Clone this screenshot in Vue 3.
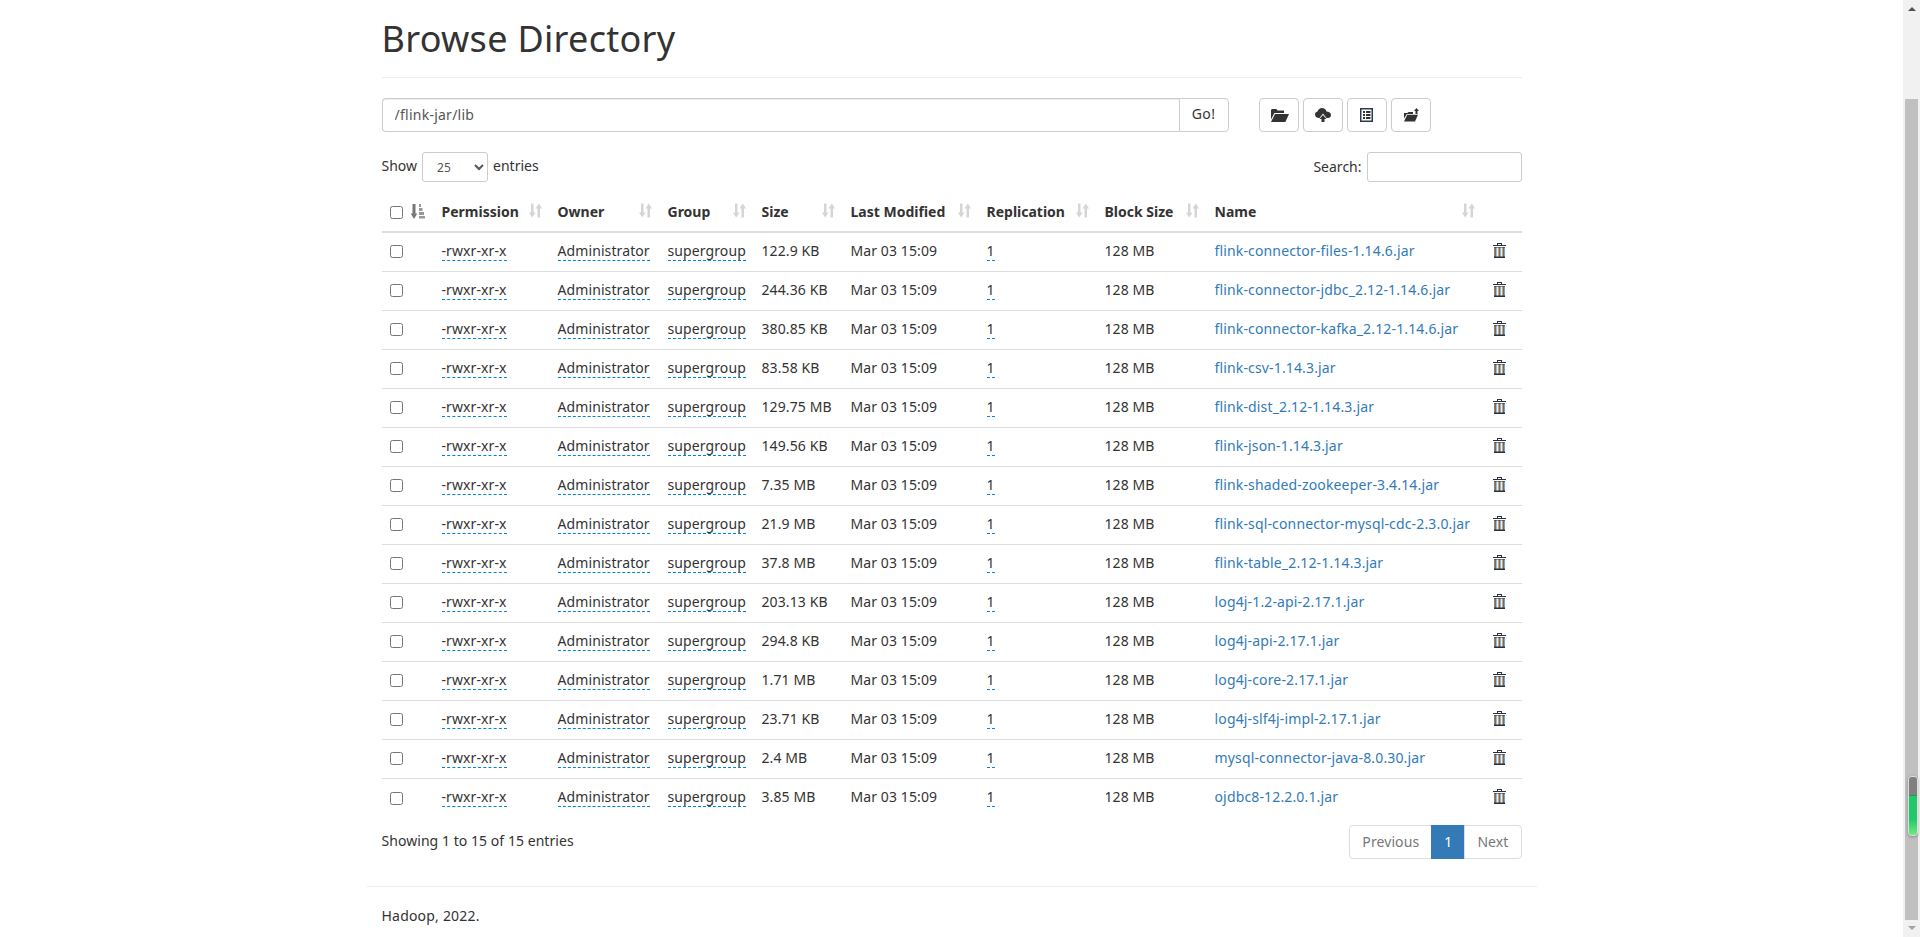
<script setup>
const names = [
  ['flink-connector-files-1.14.6.jar', '122.9 KB'],
  ['flink-connector-jdbc_2.12-1.14.6.jar', '244.36 KB'],
  ['flink-connector-kafka_2.12-1.14.6.jar', '380.85 KB'],
  ['flink-csv-1.14.3.jar', '83.58 KB'],
  ['flink-dist_2.12-1.14.3.jar', '129.75 MB'],
  ['flink-json-1.14.3.jar', '149.56 KB'],
  ['flink-shaded-zookeeper-3.4.14.jar', '7.35 MB'],
  ['flink-sql-connector-mysql-cdc-2.3.0.jar', '21.9 MB'],
  ['flink-table_2.12-1.14.3.jar', '37.8 MB'],
  ['log4j-1.2-api-2.17.1.jar', '203.13 KB'],
  ['log4j-api-2.17.1.jar', '294.8 KB'],
  ['log4j-core-2.17.1.jar', '1.71 MB'],
  ['log4j-slf4j-impl-2.17.1.jar', '23.71 KB'],
  ['mysql-connector-java-8.0.30.jar', '2.4 MB'],
  ['ojdbc8-12.2.0.1.jar', '3.85 MB'],
]
const heads = [
  ['Permission', 116], ['Owner', 110], ['Group', 94], ['Size', 89],
  ['Last Modified', 136], ['Replication', 118], ['Block Size', 110], ['Name', 276],
]
const stripes = ['#b87a30', '#4a78a8', '#8ac0ec', '#f4efe6', '#e0a050', '#7a6a70', '#7fb8e8', '#f4efe6', '#e0a050', '#4f7396', '#6fa8dc']
</script>

<template>
  <div class="page">
    <main class="main">
      <div class="container">
        <header class="page-header"><h1>Browse Directory</h1></header>
        <div class="toolbar">
          <div class="input-group">
            <input class="path" type="text" value="/flink-jar/lib" />
            <button class="go">Go!</button>
          </div>
          <div class="actions">
            <button class="btn">
              <svg class="ic-shift" width="18" height="13" viewBox="0 0 18 13"><path d="M1 0h4.500l1 1.500h6.500V4H3.400L0 10.500V1z" fill="#333"/><path d="M4 5H18l-3.600 8H0z" fill="#333"/></svg>
            </button>
            <button class="btn">
              <svg width="16" height="14" viewBox="0 0 16 14"><path fill="#333" d="M3.500 10C1.500 10 0 8.400 0 6.600c0-1.500 1-2.800 2.500-3.100C3.200 1.400 5 0 7 0c2.300 0 4 1.500 4.500 3.500C13.900 3.500 16 5 16 7c0 1.700-1.300 3-3 3h-1.500L8 5.500 4.500 10z"/><path fill="#333" d="M8 7 11.500 11H9.500V14H6.500V11H4.500z"/></svg>
            </button>
            <button class="btn">
              <svg width="13" height="14" viewBox="0 0 13 14"><path fill="#2a3a55" fill-rule="evenodd" d="M0 0h13v14H0zM1.500 1.500v11h10v-11z"/><path fill="#333" d="M3 3h2v2H3zM6 3h4.500v2H6zM3 6h2v2H3zM6 6h4.500v2H6zM3 9h2v2H3zM6 9h4.500v2H6z"/></svg>
            </button>
            <button class="btn">
              <svg class="ic-shift" width="16" height="14" viewBox="0 0 16 14"><path fill="#333" d="M0 5h3.500l1-1h4.500v2H2.800L0 10.500zM3.200 6.800H14L11 13.500H0z"/><path fill="#333" d="M12.500 0l2.500 3h-1.500v3h-2V3H10z"/></svg>
            </button>
          </div>
        </div>

        <div class="controls">
          <label class="length">
            Show
            <select class="size"><option>25</option></select>
            entries
          </label>
          <label class="search">Search: <input class="search-input" type="text" /></label>
        </div>

        <table class="table">
          <thead>
            <tr>
              <th class="first">
                <input type="checkbox" class="check" />
                <svg class="sorted" width="14" height="15" viewBox="0 0 14 15"><path fill="#777" d="M1.500 0h3v9.500h1.800L3 15-.3 9.500h1.800z"/><path fill="#999" d="M8 0h2v3H8zM8 4h3.500v3H8zM8 8h5v3H8zM8 12h6v2.500H8z"/></svg>
              </th>
              <th v-for="h in heads" :key="h[0]" :style="{ width: h[1] + 'px' }">
                <span class="th-in">
                  {{ h[0] }}
                  <svg class="sort" width="13" height="15" viewBox="0 0 13 14"><path fill="#333" d="M2 0h2.500v9H6.500L3.200 14 0 9h2zM8.500 14V5H6.500L9.800 0 13 5h-2v9z"/></svg>
                </span>
              </th>
              <th class="last"></th>
            </tr>
          </thead>
          <tbody>
            <tr v-for="n in names" :key="n[0]">
              <td class="first"><input type="checkbox" class="check" /></td>
              <td><span class="abbr">-rwxr-xr-x</span></td>
              <td><span class="abbr">Administrator</span></td>
              <td><span class="abbr">supergroup</span></td>
              <td>{{ n[1] }}</td>
              <td>Mar 03 15:09</td>
              <td><span class="abbr">1</span></td>
              <td>128 MB</td>
              <td><a class="link">{{ n[0] }}</a></td>
              <td class="last">
                <svg class="trash" width="13" height="15" viewBox="0 0 13 15">
                  <path fill="#2b3040" d="M4 0h5v2h4v1H0V2h4zM5 1v1h3V1z"/>
                  <rect x="1" y="4" width="11" height="11" fill="#2b3040"/>
                  <rect v-for="(c, i) in stripes" :key="i" :x="1 + i" y="4.500" width="1" height="9" :fill="c"/>
                </svg>
              </td>
            </tr>
          </tbody>
        </table>

        <div class="table-foot">
          <div class="info">Showing 1 to 15 of 15 entries</div>
          <div class="pagination">
            <a class="pg prev">Previous</a><a class="pg active">1</a><a class="pg next">Next</a>
          </div>
        </div>
      </div>
      <div class="footer-rule"></div>
      <div class="container"><p class="footer">Hadoop, 2022.</p></div>
    </main>
    <aside class="scrollbar">
      <div class="arrow up"></div>
      <div class="thumb"></div>
      <div class="arrow down"></div>
      <div class="meter"><div class="meter-top"></div><div class="meter-fill"></div></div>
    </aside>
  </div>
</template>

<style>
html, body { margin: 0; height: 937px; overflow: hidden; background: #fff; }
</style>

<style scoped>
.page {
  display: flex; height: 937px; overflow: hidden;
  font-family: "Noto Sans", "Open Sans", sans-serif;
  font-size: 14px; color: #333; line-height: 20px;
}
.main { flex: 1; min-width: 0; }
.container { width: 1140px; margin: 0 auto; }
.page-header { padding-top: 19px; height: 58px; border-bottom: 1px solid #eee; box-sizing: content-box; }
h1 { margin: 0; font-size: 36px; font-weight: 400; line-height: 40px; letter-spacing: .3px; }
.toolbar { display: flex; margin-top: 20px; gap: 30px; }
.input-group { display: flex; width: 847px; height: 34px; }
.path {
  flex: 1; min-width: 0; box-sizing: border-box; height: 34px; padding: 5px 12px 7px;
  border: 1px solid #ccc; border-right: 0; border-radius: 4px 0 0 4px;
  font: inherit; color: #555; outline: none; letter-spacing: .25px;
  box-shadow: inset 0 1px 1px rgba(0,0,0,.075);
}
.go {
  width: 50px; height: 34px; border: 1px solid #ccc; border-radius: 0 4px 4px 0;
  background: #fff; font: inherit; color: #333; padding: 0 0 2px; letter-spacing: .4px;
}
.actions { display: flex; gap: 4px; }
.btn {
  width: 40px; height: 34px; display: flex; align-items: center; justify-content: center;
  border: 1px solid #ccc; border-radius: 4px; background: #fff; padding: 0;
}
.ic-shift { margin-left: 2px; }
.controls { display: flex; justify-content: space-between; align-items: center; margin-top: 20px; height: 30px; }
.length { display: flex; align-items: center; gap: 5px; padding-bottom: 2px; }
.size {
  width: 66px; height: 30px; box-sizing: border-box; padding: 5px 10px; border: 1px solid #ccc;
  border-radius: 3px; background: #fff; font: inherit; font-size: 12px; color: #555; margin-top: 2px;
}
.search { display: flex; align-items: center; gap: 5px; }
.search-input {
  width: 155px; height: 30px; box-sizing: border-box; border: 1px solid #ccc; border-radius: 3px; outline: none;
}
.table { width: 1140px; border-collapse: separate; border-spacing: 0; table-layout: fixed; margin-top: 10px; }
th {
  height: 41px; box-sizing: border-box; padding: 8px; text-align: left; font-weight: 700;
  border-bottom: 2px solid #ddd; white-space: nowrap;
}
.th-in { display: flex; justify-content: space-between; align-items: center; }
.sort { opacity: .2; margin-top: -3px; }
td { height: 39px; box-sizing: border-box; padding: 6px 8px 9px; border-bottom: 1px solid #ddd; white-space: nowrap; letter-spacing: .1px; }
tbody tr:last-child td { border-bottom: 0; }
th.first { width: 52px; padding: 0 0 0 8px; }
td.first { padding: 0 0 3px 8px; }
.check { width: 13px; height: 13px; margin: 0; vertical-align: middle; }
.sorted { margin-left: 8px; vertical-align: middle; margin-top: -3px; }
.last { width: 39px; }
.abbr { border-bottom: 1px dashed #08c; }
.link { color: #337ab7; letter-spacing: .15px; }
.trash { display: block; margin-left: 2px; margin-top: -1px; }
.table-foot { display: flex; justify-content: space-between; align-items: flex-start; margin-top: 7px; }
.info { margin-top: 6px; letter-spacing: .05px; }
.pagination { display: flex; height: 34px; }
.pg {
  box-sizing: border-box; height: 34px; padding: 6px 12px; border: 1px solid #ddd; margin-left: -1px;
  color: #777; background: #fff; letter-spacing: .1px;
}
.prev { border-radius: 4px 0 0 4px; }
.next { border-radius: 0 4px 4px 0; }
.active { background: #337ab7; border-color: #337ab7; color: #fff; }
.footer-rule { width: 1170px; margin: 27px auto 0; border-top: 1px solid #eee; }
.footer { margin: 19px 0 0; letter-spacing: .2px; }
.scrollbar {
  position: relative; width: 17px; flex: none; background: #f1f1f1;
  display: flex; flex-direction: column; align-items: center; height: 937px;
}
.arrow { width: 0; height: 0; border-left: 4px solid transparent; border-right: 4px solid transparent; }
.up { margin-top: 7px; border-bottom: 4px solid #505050; }
.thumb { width: 13px; height: 821px; margin-top: 88px; background: #c0c0c0; }
.down { margin-top: 6px; border-top: 4px solid #a3a3a3; }
.meter {
  position: absolute; left: 5px; top: 776px; width: 8px; height: 58px; border: 1px solid #ddd;
  border-radius: 4px; overflow: hidden; box-shadow: 0 1px 3px rgba(0,0,0,.3);
}
.meter-top { height: 18px; background: #808080; border-bottom: 1px solid #1f9a5a; }
.meter-fill { height: 39px; background: linear-gradient(#21c96b 60%, #6fec80); }
</style>
